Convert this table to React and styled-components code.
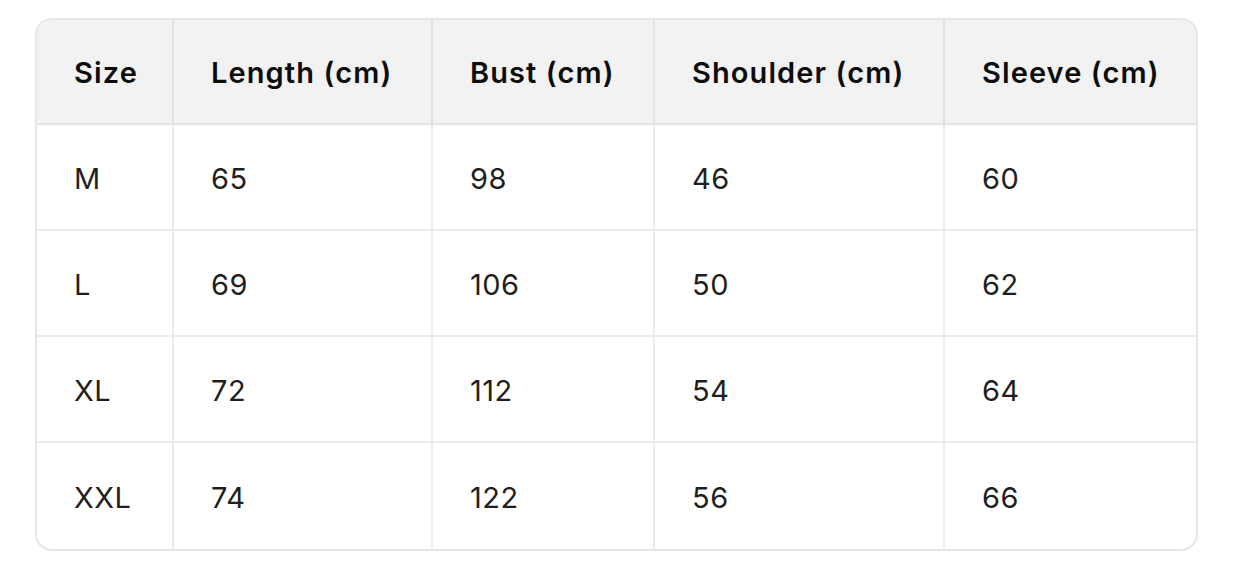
import React from 'react';
import styled, { createGlobalStyle } from 'styled-components';

const GlobalStyle = createGlobalStyle`
  html, body {
    margin: 0;
    padding: 0;
    background: #fff;
  }
  body {
    font-family: Inter, "Noto Sans", "Liberation Sans", sans-serif;
  }
`;

const columns = [
  { label: 'Size', width: 137 },
  { label: 'Length (cm)', width: 259 },
  { label: 'Bust (cm)', width: 222 },
  { label: 'Shoulder (cm)', width: 290 },
  { label: 'Sleeve (cm)', width: 255 },
];

const rows = [
  ['M', '65', '98', '46', '60'],
  ['L', '69', '106', '50', '62'],
  ['XL', '72', '112', '54', '64'],
  ['XXL', '74', '122', '56', '66'],
];

const App = () => {
  return (
    <Page>
      <GlobalStyle />
      <TableWrap>
        <Table>
          <colgroup>
            {columns.map((c) => (
              <col key={c.label} style={{ width: c.width }} />
            ))}
          </colgroup>
          <thead>
            <tr>
              {columns.map((c) => (
                <HeadCell key={c.label}>{c.label}</HeadCell>
              ))}
            </tr>
          </thead>
          <tbody>
            {rows.map((r) => (
              <tr key={r[0]}>
                {r.map((v, i) => (
                  <Cell key={i}>{v}</Cell>
                ))}
              </tr>
            ))}
          </tbody>
        </Table>
      </TableWrap>
    </Page>
  );
};

export default App;

const Page = styled.div`
  padding: 18px 0 0 35px;
`;

const TableWrap = styled.div`
  width: 1163px;
  box-sizing: border-box;
  border: 2px solid #e6e6e6;
  border-radius: 17px;
  overflow: hidden;
`;

const Table = styled.table`
  width: 100%;
  table-layout: fixed;
  border-collapse: separate;
  border-spacing: 0;

  tr > *:last-child {
    border-right: 0;
  }
  tbody tr:last-child > * {
    border-bottom: 0;
  }
`;

const HeadCell = styled.th`
  height: 105px;
  box-sizing: border-box;
  padding: 2px 0 0 37px;
  text-align: left;
  background: #f2f2f2;
  color: #0d0d0d;
  font-size: 29px;
  font-weight: 600;
  letter-spacing: 1.1px;
  border-right: 2px solid #e3e3e3;
  border-bottom: 2px solid #e3e3e3;
`;

const Cell = styled.td`
  height: 106px;
  box-sizing: border-box;
  padding: 2px 0 0 37px;
  text-align: left;
  color: #1f1f1f;
  font-size: 29px;
  font-weight: 400;
  letter-spacing: 0.5px;
  border-right: 2px solid #ebebeb;
  border-bottom: 2px solid #ebebeb;
`;
